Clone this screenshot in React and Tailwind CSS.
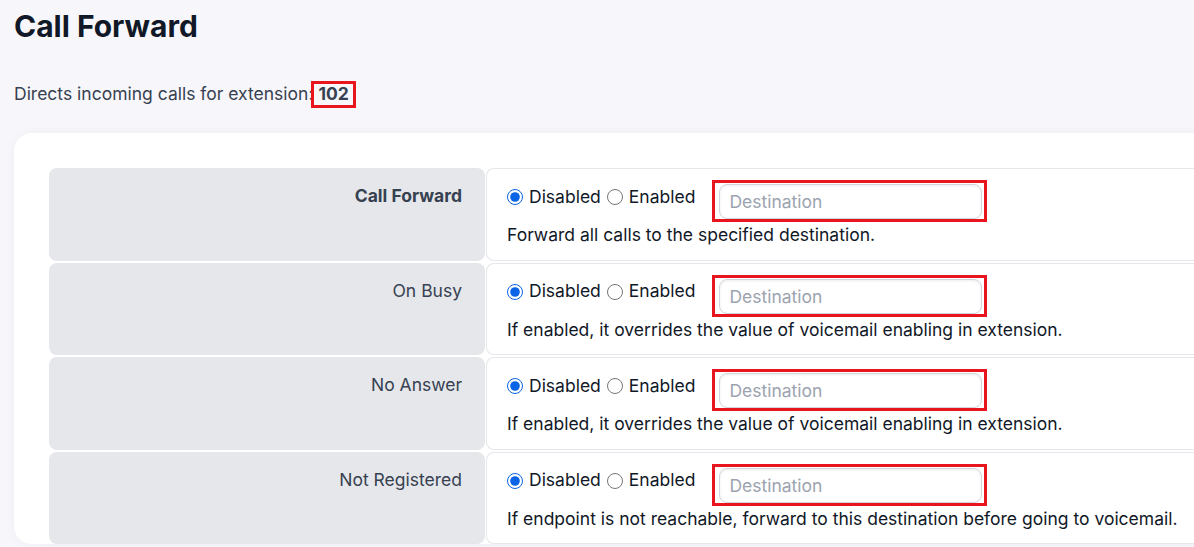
import { useState } from "react";

const ROWS = [
  { key: "all", label: "Call Forward", bold: true, help: "Forward all calls to the specified destination." },
  { key: "busy", label: "On Busy", help: "If enabled, it overrides the value of voicemail enabling in extension." },
  { key: "noanswer", label: "No Answer", help: "If enabled, it overrides the value of voicemail enabling in extension." },
  {
    key: "unreg",
    label: "Not Registered",
    help: "If endpoint is not reachable, forward to this destination before going to voicemail.",
  },
];

const Mark = ({ className }) => (
  <span className={`pointer-events-none absolute border-[3px] border-[#e8151f] ${className}`} />
);

const ForwardRow = ({ row }) => {
  const [mode, setMode] = useState("disabled");
  const [dest, setDest] = useState("");

  return (
    <>
      <div className="flex h-[92.5px] justify-end rounded-lg bg-[#e5e7eb] pr-[23px] pt-4">
        <span className={`text-[17.5px] leading-6 text-[#374151] ${row.bold ? "font-bold" : ""}`}>{row.label}</span>
      </div>
      <div className="h-[92.5px] rounded-l-lg border border-r-0 border-[#e5e7eb] bg-white pl-5 pt-4">
        <div className="flex items-start">
          <label className="flex h-6 items-center gap-1.5 text-[17.5px] text-[#111827]">
            <input
              type="radio"
              name={row.key}
              checked={mode === "disabled"}
              onChange={() => setMode("disabled")}
              className="h-4 w-4 accent-[#0b63e5]"
            />
            Disabled
          </label>
          <label className="ml-1.5 flex h-6 items-center gap-1.5 text-[17.5px] text-[#111827]">
            <input
              type="radio"
              name={row.key}
              checked={mode === "enabled"}
              onChange={() => setMode("enabled")}
              className="h-4 w-4 accent-[#0b63e5]"
            />
            Enabled
          </label>
          <div className="relative ml-6">
            <input
              type="text"
              value={dest}
              onChange={(e) => setDest(e.target.value)}
              placeholder="Destination"
              className="-mt-px h-[35px] w-[263px] rounded-lg border border-[#d1d5db] bg-white px-[9px] text-[17.5px] text-[#111827] shadow-[inset_0_1px_3px_rgba(0,0,0,0.08)] outline-none placeholder:text-[#9ca3af]"
            />
            <Mark className="-bottom-[3px] -left-[7px] -right-[5px] -top-[5px]" />
          </div>
        </div>
        <p className="mt-1 text-[17.5px] leading-6 text-[#111827]">{row.help}</p>
      </div>
    </>
  );
};

export default function App() {
  return (
    <div
      className="h-[547px] w-full overflow-hidden bg-[#f7f7fb]"
      style={{ fontFamily: "Inter, 'Noto Sans', sans-serif" }}
    >
      <div className="px-[14px] pt-2">
        <h1 className="text-3xl font-bold leading-9 text-[#111827]">Call Forward</h1>
        <p className="mt-[38px] text-[17.5px] leading-6 text-[#374151]">
          Directs incoming calls for extension:
          <span className="relative ml-[5px] inline-block font-bold">
            102
            <Mark className="-bottom-[2px] -left-[7px] -right-[7px] -top-[1px]" />
          </span>
        </p>
        <div className="mt-[27px] w-[1250px] rounded-[18px] bg-white pl-[35px] pt-[35px] shadow-[0_0_12px_rgba(0,0,0,0.04)]">
          <div className="grid grid-cols-[436px_1fr] gap-x-px gap-y-[2px]">
            {ROWS.map((row) => (
              <ForwardRow key={row.key} row={row} />
            ))}
          </div>
        </div>
      </div>
    </div>
  );
}
